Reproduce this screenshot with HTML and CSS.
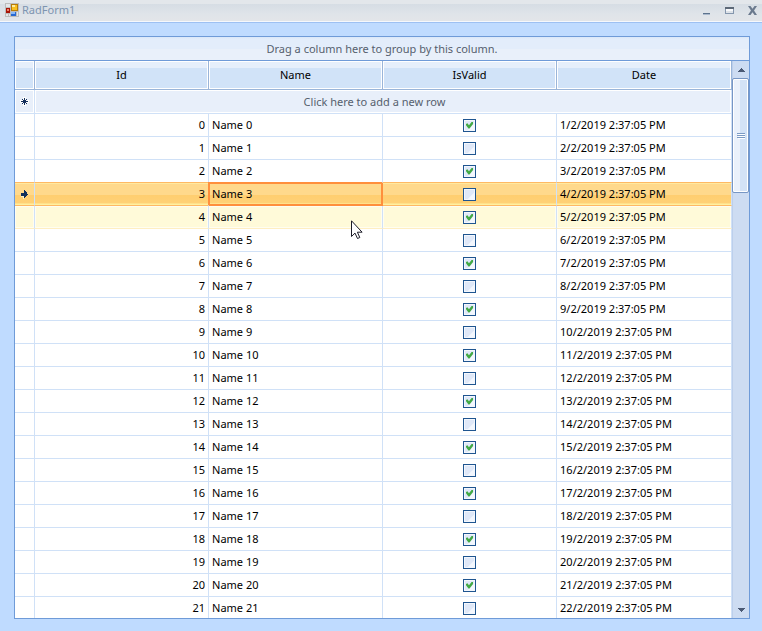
FILE: index.html
```html
<!DOCTYPE html>
<html lang="en">
<head>
    <meta charset="UTF-8">
    <meta name="viewport" content="width=device-width, initial-scale=1.0">
    <title>RadForm1</title>
    <link rel="stylesheet" href="styles.css">
</head>
<body>
    <header class="titlebar">
        <svg class="app-icon" width="14" height="14" viewBox="0 0 14 14" shape-rendering="crispEdges">
            <rect width="14" height="14" fill="#bcbcbc"/>
            <path fill="#e4e6e8" d="M1 1h4v3H1zM1 11h2v2H1zM4 11h1v2H4zM12 9h1v4h-1z"/>
            <rect x="1" y="5" width="4" height="5" fill="#a81408"/>
            <rect x="2" y="6" width="2" height="2" fill="#f08068"/>
            <rect x="6" y="1" width="7" height="7" fill="#b87c08"/>
            <rect x="7" y="2" width="5" height="5" fill="#f8c020"/>
            <rect x="7" y="2" width="3" height="2" fill="#fdeca0"/>
            <rect x="6" y="9" width="5" height="4" fill="#2868d0"/>
            <rect x="6" y="9" width="4" height="2" fill="#88b8f8"/>
        </svg>
        <h1 class="title">RadForm1</h1>
        <div class="window-buttons">
            <button type="button" aria-label="Minimize">
                <svg width="9" height="9" viewBox="0 0 9 9" shape-rendering="crispEdges"><path fill="#5c728d" d="M1 7h7v1H1z"/><path fill="#aab9cc" d="M1 8h7v1H1z"/></svg>
            </button>
            <button type="button" aria-label="Maximize">
                <svg width="9" height="9" viewBox="0 0 9 9" shape-rendering="crispEdges"><path fill="#5c6877" d="M0 1h9v2H0z"/><path fill="none" stroke="#8496ad" d="M.5 2.500v5h8v-5"/><path fill="#f8f9fb" d="M1 3h7v2H1z"/></svg>
            </button>
            <button type="button" aria-label="Close">
                <svg width="9" height="9" viewBox="0 0 9 9"><path fill="#6b7a8e" d="M0 0h2.500l2 2.800L6.500 0H9L6 4.500 9 9H6.500l-2-2.800-2 2.800H0l3-4.500z"/></svg>
            </button>
        </div>
    </header>

    <main class="grid">
        <div class="group-panel">Drag a column here to group by this column.</div>
        <div class="grid-body">
            <div class="table-wrap">
                <table>
                    <colgroup>
                        <col class="col-indicator">
                        <col class="col-data">
                        <col class="col-data">
                        <col class="col-data">
                        <col>
                    </colgroup>
                    <thead>
                        <tr>
                            <td></td>
                            <th scope="col">Id</th>
                            <th scope="col">Name</th>
                            <th scope="col">IsValid</th>
                            <th scope="col">Date</th>
                        </tr>
                    </thead>
                    <tbody id="rows">
                        <tr class="new-row">
                            <td class="indicator">
                                <svg width="9" height="9" viewBox="0 0 9 9"><path stroke="#fff" stroke-width="3" d="M4.500 0v9M0 4.500h9"/><path stroke="#15305c" d="M4.500 1v7M1 4.500h7M2 2l5 5M7 2L2 7"/></svg>
                            </td>
                            <td class="new-row-text" colspan="4">Click here to add a new row</td>
                        </tr>
                    </tbody>
                </table>
            </div>
            <div class="scrollbar">
                <button type="button" aria-label="Scroll up">
                    <svg width="7" height="4" viewBox="0 0 7 4" shape-rendering="crispEdges"><path fill="#4b5a75" d="M3 0h1v1h1v1h1v1h1v1H0V3h1V2h1V1h1z"/></svg>
                </button>
                <div class="track">
                    <div class="thumb">
                        <svg width="8" height="6" viewBox="0 0 8 6" shape-rendering="crispEdges"><path fill="#fff" d="M1 1h7v1H1zM1 3h7v1H1zM1 5h7v1H1z"/><path fill="#7b9ac4" d="M0 0h8v1H0zM0 2h8v1H0zM0 4h8v1H0z"/></svg>
                    </div>
                </div>
                <button type="button" aria-label="Scroll down">
                    <svg width="7" height="4" viewBox="0 0 7 4" shape-rendering="crispEdges"><path fill="#4b5a75" d="M0 0h7v1H6v1H5v1H4v1H3V3H2V2H1V1H0z"/></svg>
                </button>
            </div>
        </div>
    </main>

    <svg class="cursor" width="12" height="20" viewBox="0 0 12 20"><path fill="#fff" stroke="#1c1c28" d="M.5.8v15.700l3.500-3.400 2.500 5.400 2.300-1-2.400-5.300h4.700z"/></svg>

    <script>
        const rows = document.getElementById("rows");
        const arrow = '<svg width="7" height="9" viewBox="0 0 7 9" shape-rendering="crispEdges"><path fill="#fff0c0" d="M0 6h3v3H2V7H0z"/><path fill="#10305c" d="M0 3h3V0h1v1h1v1h1v2h1v1H6v1H5v1H4v1H3V6H0z"/></svg>';
        const selectedRow = 3;
        const hoveredRow = 4;

        for (let i = 0; i < 22; i++) {
            const row = document.createElement("tr");
            const selected = i === selectedRow;
            if (selected) row.className = "selected";
            if (i === selectedRow - 1) row.className = "before-selected";
            if (i === hoveredRow) row.className = "hovered";

            row.innerHTML = `
                <td class="indicator">${selected ? arrow : ""}</td>
                <td class="id">${i}</td>
                <td class="${selected ? "name current" : "name"}">Name ${i}</td>
                <td class="valid"><input type="checkbox" aria-label="IsValid ${i}" ${i % 2 === 0 ? "checked" : ""}></td>
                <td class="date">${i + 1}/2/2019 2:37:05 PM</td>`;
            rows.appendChild(row);
        }
    </script>
</body>
</html>
```
FILE: styles.css
```css
* {
    box-sizing: border-box;
}

body {
    margin: 0;
    height: 100vh;
    display: flex;
    flex-direction: column;
    background: #bfdbff;
    font-family: "Noto Sans", "Open Sans", sans-serif;
    font-size: 11px;
    line-height: 16px;
    color: #000;
    overflow: hidden;
}

svg {
    display: block;
}

button {
    display: flex;
    align-items: center;
    justify-content: center;
    padding: 0;
    border: none;
    background: none;
}

.titlebar {
    flex: none;
    display: flex;
    align-items: center;
    height: 23px;
    padding: 0 5px 2px;
    background: linear-gradient(#e3e7eb 4px, #d6dde4 4px, #dfe4e9 14px, #e2e5e9 20px);
    border-bottom: 1px solid #9dc0f2;
    box-shadow: inset 0 -1px 0 #f5f8fc;
}

.title {
    margin: 0 0 0 3px;
    font-size: 11px;
    font-weight: normal;
    color: #7d94b0;
}

.window-buttons {
    display: flex;
    gap: 14px;
    margin-left: auto;
}

.grid {
    flex: 1;
    min-height: 0;
    display: flex;
    flex-direction: column;
    margin: 13px 12px 12px 14px;
    border: 1px solid #6f9bd8;
    background: #fff;
}

.group-panel {
    flex: none;
    height: 24px;
    padding-top: 4px;
    text-align: center;
    color: #565f6e;
    background: linear-gradient(#d9e7f9, #e3edfb 2px, #e3edfb 12px, #e9f0fa 12px);
    border-bottom: 1px solid #6f9bd8;
}

.grid-body {
    flex: 1;
    min-height: 0;
    display: flex;
}

.table-wrap {
    flex: 1;
    overflow: hidden;
}

table {
    width: 100%;
    table-layout: fixed;
    border-collapse: separate;
    border-spacing: 0;
}

.col-indicator {
    width: 20px;
}

.col-data {
    width: 24.27%;
}

th,
td {
    height: 23px;
    padding: 0 3px;
    border-right: 1px solid #d0e1f7;
    border-bottom: 1px solid #d0e1f7;
    font-weight: normal;
}

thead th,
thead td {
    height: 29px;
    border-color: #9ab5d9;
    background: linear-gradient(#e6effb 7px, #d1e3f8 7px);
    box-shadow: inset 0 0 0 1px #fff;
}

.new-row td {
    height: 24px;
    text-align: center;
    color: #565f6e;
    background: #e8effa;
    box-shadow: inset 0 0 0 1px #fff;
}

.new-row .new-row-text {
    padding-right: 20px;
}

.indicator svg {
    margin: 0 auto;
}

td.id {
    text-align: right;
}

.valid input {
    appearance: none;
    display: block;
    width: 13px;
    height: 13px;
    margin: 0 auto;
    border: 1px solid #1f5590;
    background: linear-gradient(135deg, #dfe8f8 60%, #f3f7fe 65%);
    box-shadow: inset 0 0 0 1px #f3f7fd;
}

.valid input:checked::after {
    content: "";
    display: block;
    width: 7px;
    height: 7px;
    margin: 2px;
    background: #42a945;
    clip-path: polygon(0 35%, 20% 25%, 42% 52%, 85% 0, 100% 5%, 100% 35%, 50% 100%, 35% 100%, 0 55%);
}

.before-selected td {
    border-bottom-color: #ffb963;
}

.selected td {
    border-bottom-color: #ffb963;
    background: linear-gradient(#ffe9a0 1px, #ffd98c 1px, #ffd98c 12px, #ffce70 12px, #ffd176 20px, #fff0a0 21px);
    background-clip: padding-box;
}

.selected .current {
    position: relative;
    border-color: #ff8f3c;
    box-shadow: -1px -1px 0 #ff8f3c, inset 1px 1px 0 #ff8f3c, inset -1px -1px 0 #ff8f3c;
}

.hovered td {
    border-bottom-color: #ffeec2;
    background: #fffad9;
    background-clip: padding-box;
    box-shadow: inset 0 0 0 1px #fffdf0;
}

.scrollbar {
    flex: none;
    display: flex;
    flex-direction: column;
    width: 17px;
    background: #cddcf2;
    border-left: 1px solid #bccfec;
}

.scrollbar button {
    height: 17px;
}

.track {
    flex: 1;
    min-height: 0;
}

.thumb {
    display: flex;
    align-items: center;
    justify-content: center;
    height: 22%;
    margin-left: -1px;
    border: 1px solid #7796c4;
    border-radius: 2px;
    background: linear-gradient(90deg, #eaf1fb 7px, #d3e2f6 7px);
    box-shadow: inset 0 0 0 1px #fff;
}

.cursor {
    position: absolute;
    left: 351px;
    top: 220px;
}
```
